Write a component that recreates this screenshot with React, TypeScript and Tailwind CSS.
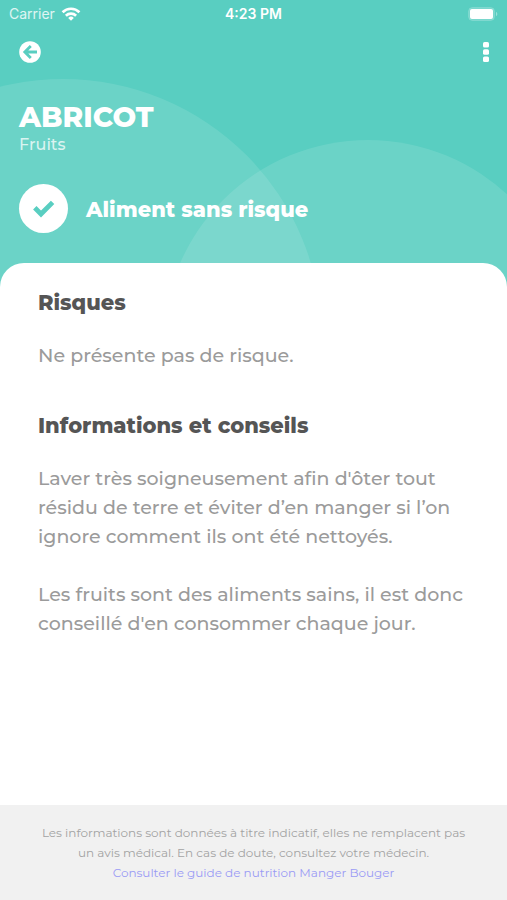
interface SectionProps {
  title: string;
  paragraphs: string[];
}

function StatusBar() {
  return (
    <div className="grid h-7 grid-cols-3 items-center px-[9px] font-['Inter',sans-serif] text-sm leading-5 text-white">
      <div className="flex items-center gap-1.5">
        <span className="text-white/80">Carrier</span>
        <svg className="h-[14px] w-5" viewBox="0 0 20 14" fill="none" stroke="white" strokeWidth="2.7">
          <path d="M1.6 5.2a12 12 0 0 1 16.8 0" />
          <path d="M4.9 8.7a7.3 7.3 0 0 1 10.2 0" />
          <path d="M10 13.8 7.2 10.9a4 4 0 0 1 5.6 0Z" fill="white" stroke="none" />
        </svg>
      </div>
      <span className="text-center font-semibold">4:23 PM</span>
      <svg className="h-[14px] w-[30px] justify-self-end" viewBox="0 0 30 14">
        <rect x="0.5" y="0.5" width="26" height="13" rx="4" fill="white" fillOpacity="0.2" stroke="white" strokeOpacity="0.15" />
        <rect x="2" y="2" width="23" height="10" rx="2" fill="white" />
        <path d="M28 4.8c1.8.8 1.8 3.6 0 4.4Z" fill="white" fillOpacity="0.4" />
      </svg>
    </div>
  );
}

function Section({ title, paragraphs }: SectionProps) {
  return (
    <section>
      <h2 className="text-[21px] leading-7 font-extrabold text-[#555555]">{title}</h2>
      <div className="mt-6 flex flex-col gap-[29px]">
        {paragraphs.map((text) => (
          <p key={text} className="text-[19px] leading-[29px] font-medium text-[#9b9b9b]">
            {text}
          </p>
        ))}
      </div>
    </section>
  );
}

export default function App() {
  return (
    <div className="flex min-h-screen flex-col bg-white font-['Montserrat','Inter',sans-serif]">
      <header className="relative overflow-hidden bg-[#59cec1] pb-[54px] text-white">
        <svg className="absolute top-0 left-0 h-full w-full" viewBox="0 0 507 287" preserveAspectRatio="xMidYMin slice" aria-hidden="true">
          <circle cx="63" cy="338" r="259" fill="white" fillOpacity="0.11" />
          <circle cx="368" cy="345" r="205" fill="white" fillOpacity="0.11" />
        </svg>
        <div className="relative">
          <StatusBar />
          <div className="flex h-12 items-center justify-between pr-4 pl-[19px]">
            <button aria-label="Retour">
              <svg className="size-[22px]" viewBox="0 0 22 22" fill="none">
                <circle cx="11" cy="11" r="10.8" fill="white" />
                <path d="M11.8 5 5.8 11l6 6M6 11h12" stroke="#59cec1" strokeWidth="2.8" />
              </svg>
            </button>
            <button aria-label="Menu">
              <svg className="h-5 w-[10px]" viewBox="0 0 10 20" fill="white">
                <rect x="2" y="0" width="6" height="5.6" rx="1.6" />
                <rect x="2" y="7.2" width="6" height="5.6" rx="1.6" />
                <rect x="2" y="14.4" width="6" height="5.6" rx="1.6" />
              </svg>
            </button>
          </div>
          <div className="px-[19px] pt-[25px]">
            <h1 className="text-[28px] leading-8 font-extrabold">ABRICOT</h1>
            <p className="text-base leading-6 font-medium text-white/75">Fruits</p>
            <div className="mt-[27px] flex items-center gap-[18px]">
              <span className="flex size-[49px] items-center justify-center rounded-full bg-white">
                <svg className="size-[22px]" viewBox="0 0 22 22" fill="none" stroke="#59cec1" strokeWidth="4.8">
                  <path d="M1.8 9.8 8 16 19.6 4.4" />
                </svg>
              </span>
              <p className="pt-0.5 text-[21px] leading-7 font-extrabold">Aliment sans risque</p>
            </div>
          </div>
        </div>
      </header>

      <main className="relative -mt-6 flex flex-1 flex-col gap-[42px] rounded-t-3xl bg-white px-[38px] pt-[26px] pb-10">
        <Section title="Risques" paragraphs={['Ne présente pas de risque.']} />
        <Section
          title="Informations et conseils"
          paragraphs={[
            "Laver très soigneusement afin d'ôter tout résidu de terre et éviter d’en manger si l’on ignore comment ils ont été nettoyés.",
            "Les fruits sont des aliments sains, il est donc conseillé d'en consommer chaque jour.",
          ]}
        />
      </main>

      <footer className="bg-[#f1f1f1] px-9 pt-[18px] pb-[17px] text-center text-xs leading-5 text-[#a3a3a3]">
        <p>
          Les informations sont données à titre indicatif, elles ne remplacent pas un avis médical. En cas de doute, consultez votre médecin.
        </p>
        <a href="#guide" className="text-[#9a9bf5]">
          Consulter le guide de nutrition Manger Bouger
        </a>
      </footer>
    </div>
  );
}
